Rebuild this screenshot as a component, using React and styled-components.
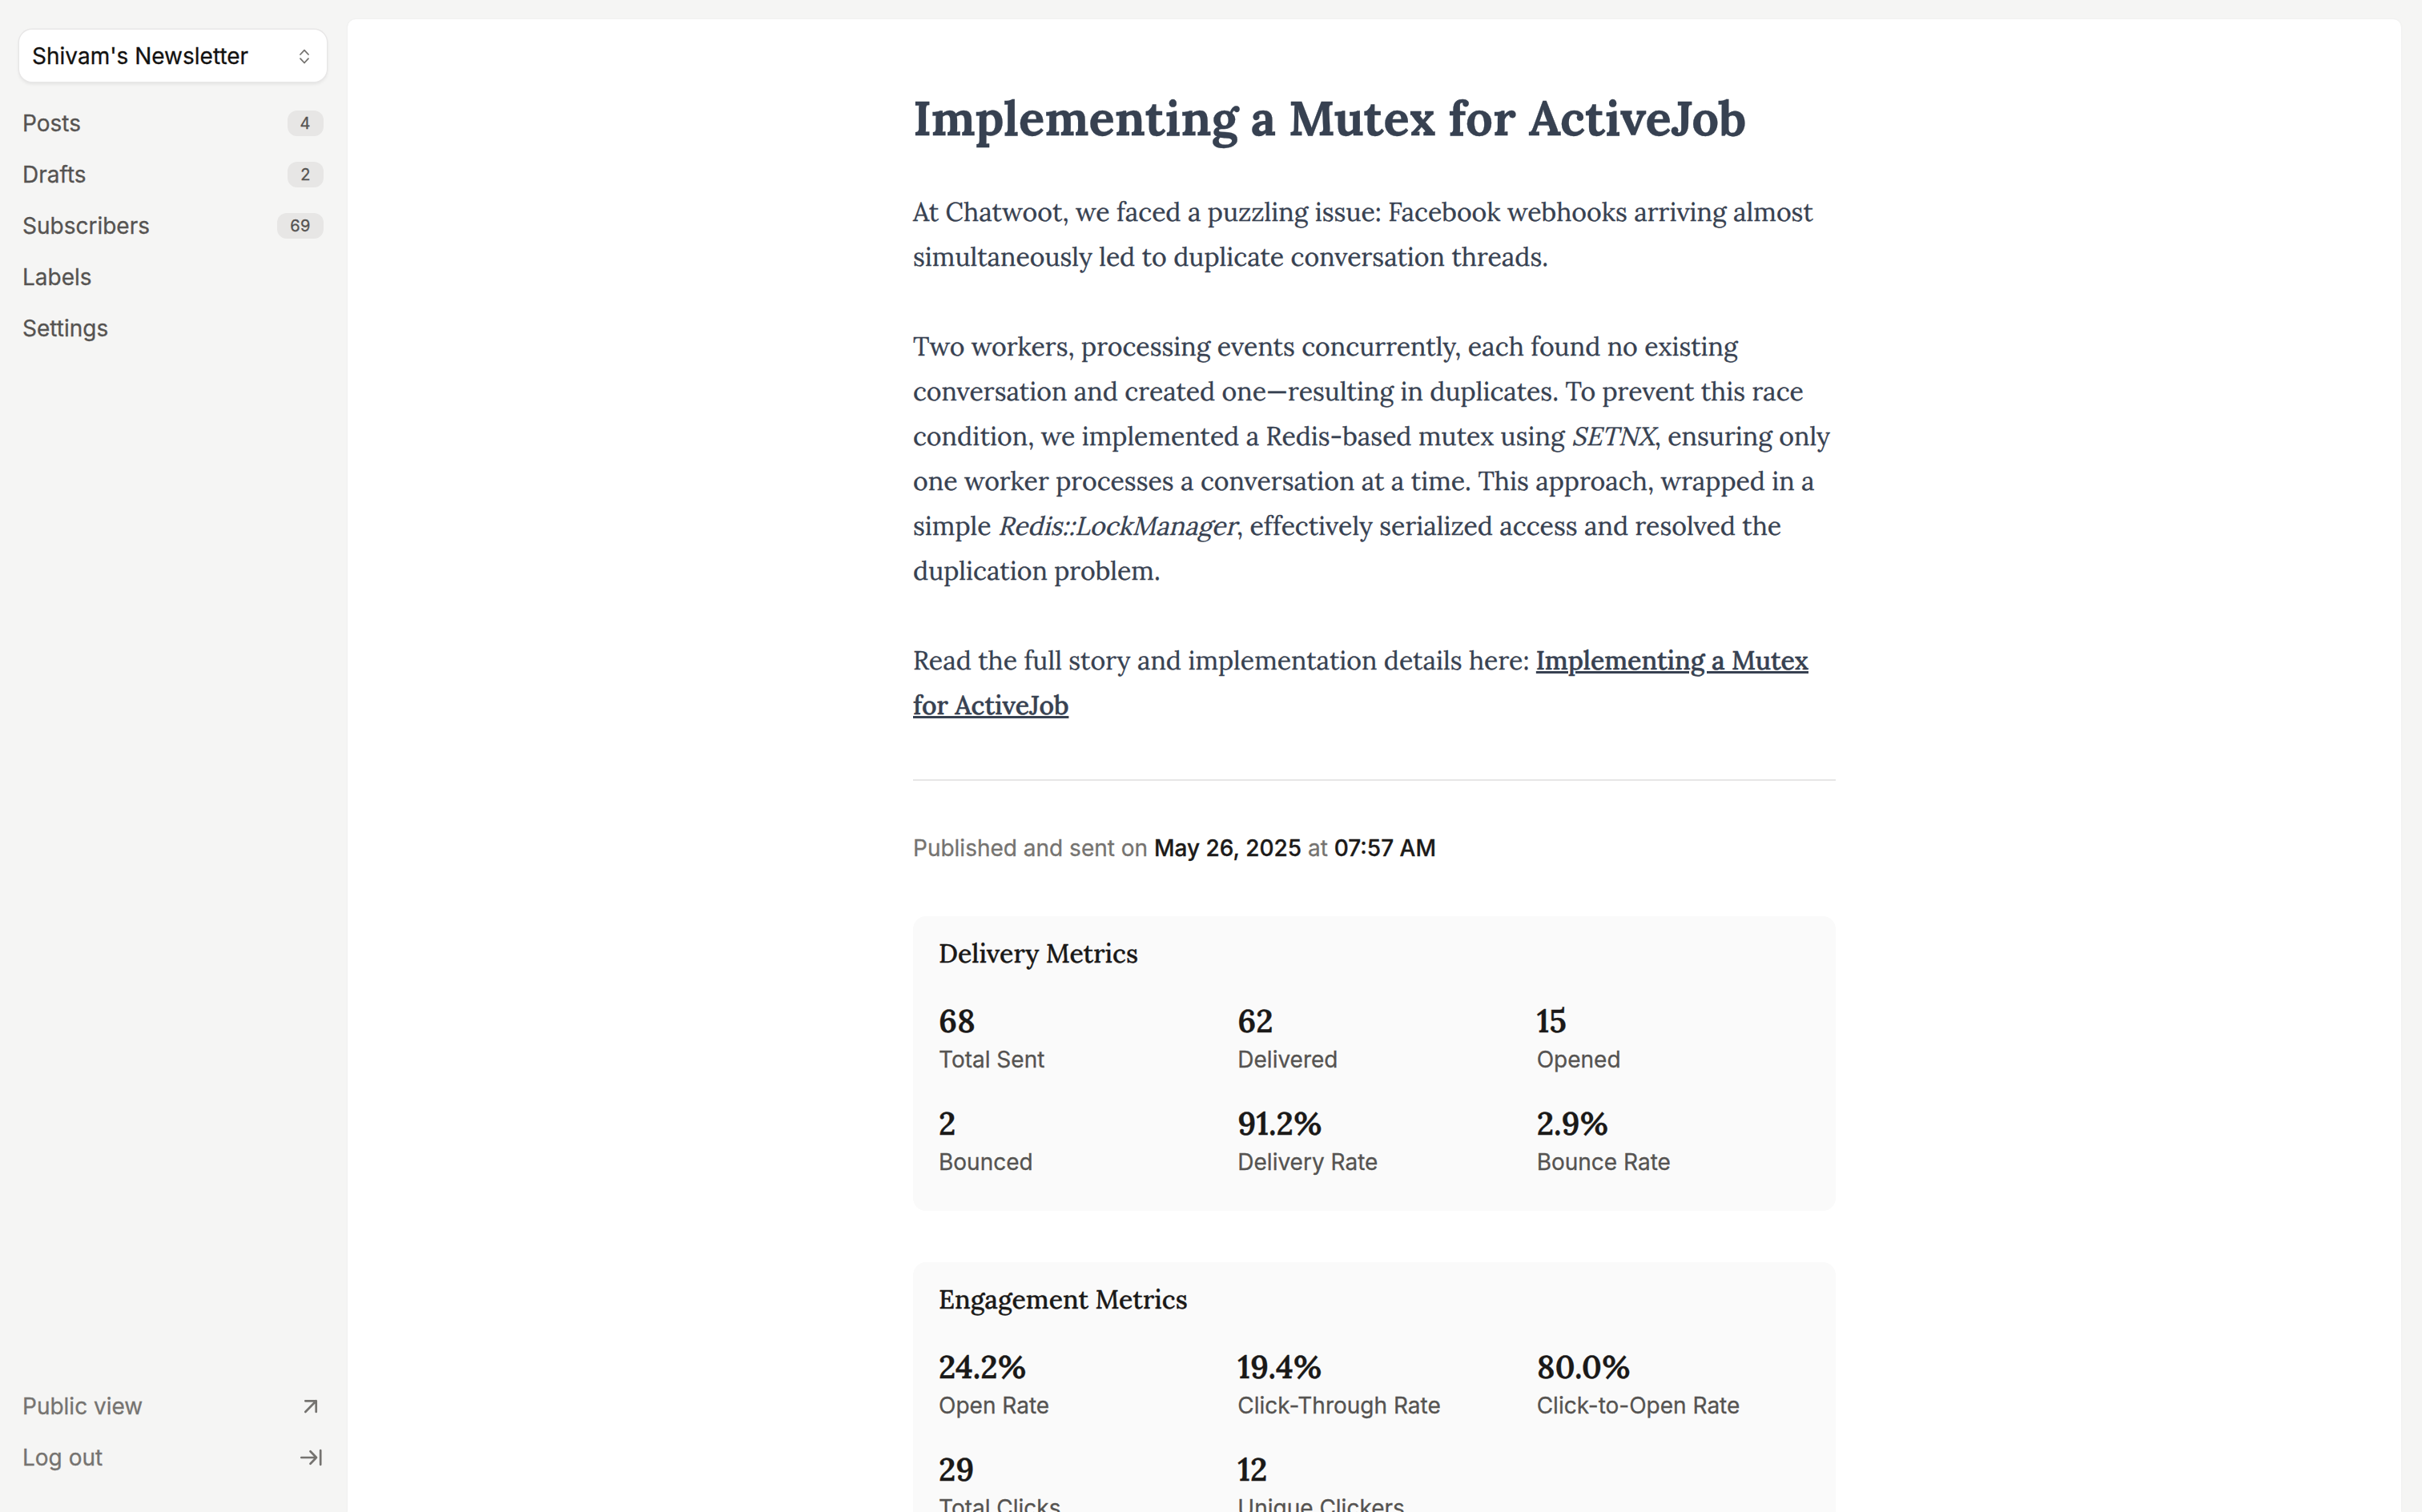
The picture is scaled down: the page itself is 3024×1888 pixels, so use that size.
import React from 'react'
import styled, { createGlobalStyle } from 'styled-components'

const navItems = [
  { label: 'Posts', count: 4 },
  { label: 'Drafts', count: 2 },
  { label: 'Subscribers', count: 69 },
  { label: 'Labels' },
  { label: 'Settings' },
]

const deliveryMetrics = [
  { value: '68', label: 'Total Sent' },
  { value: '62', label: 'Delivered' },
  { value: '15', label: 'Opened' },
  { value: '2', label: 'Bounced' },
  { value: '91.2%', label: 'Delivery Rate' },
  { value: '2.9%', label: 'Bounce Rate' },
]

const engagementMetrics = [
  { value: '24.2%', label: 'Open Rate' },
  { value: '19.4%', label: 'Click-Through Rate' },
  { value: '80.0%', label: 'Click-to-Open Rate' },
  { value: '29', label: 'Total Clicks' },
  { value: '12', label: 'Unique Clickers' },
]

const App = () => (
  <>
    <GlobalStyle />
    <Layout>
      <Sidebar />
      <Main>
        <Content>
          <Post />
          <Divider />
          <PublishedAt>
            Published and sent on <b>May 26, 2025</b> at <b>07:57 AM</b>
          </PublishedAt>
          <Cards>
            <MetricsCard title="Delivery Metrics" metrics={deliveryMetrics} />
            <MetricsCard title="Engagement Metrics" metrics={engagementMetrics} />
          </Cards>
        </Content>
      </Main>
    </Layout>
  </>
)

const Sidebar = () => (
  <Aside>
    <Switcher>
      Shivam's Newsletter
      <ChevronsIcon />
    </Switcher>
    <Nav>
      {navItems.map(({ label, count }) => (
        <NavItem key={label}>
          {label}
          {count && <Badge>{count}</Badge>}
        </NavItem>
      ))}
    </Nav>
    <Footer>
      <NavItem $muted>
        Public view
        <ArrowOutIcon />
      </NavItem>
      <NavItem $muted>
        Log out
        <LogOutIcon />
      </NavItem>
    </Footer>
  </Aside>
)

const Post = () => (
  <Article>
    <h1>Implementing a Mutex for ActiveJob</h1>
    <p>
      At Chatwoot, we faced a puzzling issue: Facebook webhooks arriving almost
      simultaneously led to duplicate conversation threads.
    </p>
    <p>
      Two workers, processing events concurrently, each found no existing
      conversation and created one—resulting in duplicates. To prevent this race
      condition, we implemented a Redis-based mutex using <em>SETNX</em>, ensuring
      only one worker processes a conversation at a time. This approach, wrapped in
      a simple <em>Redis::LockManager</em>, effectively serialized access and
      resolved the duplication problem.
    </p>
    <p>
      Read the full story and implementation details here:{' '}
      <a href="#post">Implementing a Mutex for ActiveJob</a>
    </p>
  </Article>
)

const MetricsCard = ({ title, metrics }) => (
  <Card>
    <h3>{title}</h3>
    <Grid>
      {metrics.map(({ value, label }) => (
        <div key={label}>
          <Value>{value}</Value>
          <Label>{label}</Label>
        </div>
      ))}
    </Grid>
  </Card>
)

const ChevronsIcon = () => (
  <Icon width="20" height="24" viewBox="0 0 20 24" $stroke={1.8}>
    <path d="M5 10 10 4.700l5 5.300M5 15.200l5 5.300 5-5.300" />
  </Icon>
)

const ArrowOutIcon = () => (
  <Icon width="32" height="32" viewBox="0 0 32 32">
    <path d="M9.300 23 22.700 9.300M9.300 9.300h13.400V23" />
  </Icon>
)

const LogOutIcon = () => (
  <Icon width="32" height="32" viewBox="0 0 32 32">
    <path d="M4.300 16H23M15.500 8.300 23 16l-7.500 7.700M28.200 7.200v17.600" />
  </Icon>
)

const GlobalStyle = createGlobalStyle`
  body {
    margin: 0;
    background: #f5f5f4;
    font-family: Inter, "Liberation Sans", sans-serif;
    font-size: 28px;
    -webkit-font-smoothing: antialiased;
    -webkit-text-stroke: 0.3px currentColor;
  }

  * { box-sizing: border-box; }
`

const Layout = styled.div`
  display: flex;
  height: 1888px;
  overflow: hidden;
`

const Aside = styled.aside`
  display: flex;
  flex-direction: column;
  flex: 0 0 434px;
  padding: 37px 26px 36px 24px;
`

const Switcher = styled.div`
  display: flex;
  align-items: center;
  justify-content: space-between;
  height: 65px;
  padding: 0 18px 0 16px;
  border-radius: 16px;
  background: white;
  color: #121110;
  box-shadow: 0 0 0 1.5px #e8e7e7, 0 3px 4px rgba(0, 0, 0, 0.08);

  svg { color: #757370; }
`

const Nav = styled.nav`
  padding: 20px 4px 0;
`

const NavItem = styled.div`
  display: flex;
  align-items: center;
  justify-content: space-between;
  height: 64px;
  color: ${({ $muted }) => ($muted ? '#757370' : '#555351')};
`

const Badge = styled.span`
  height: 32px;
  padding: 0 16px;
  border-radius: 12px;
  background: #e7e6e5;
  font-size: 20px;
  line-height: 33px;
  letter-spacing: 0.5px;
`

const Footer = styled.div`
  margin-top: auto;
  padding: 0 4px;
`

const Icon = styled.svg`
  fill: none;
  stroke: currentColor;
  stroke-width: ${({ $stroke }) => $stroke || 2.7};
  stroke-linecap: round;
  stroke-linejoin: round;
`

const Main = styled.main`
  flex: 1;
  margin: 24px 26px 0 0;
  padding-top: 87px;
  border-radius: 10px 10px 0 0;
  background: white;
  box-shadow: 0 0 3px rgba(0, 0, 0, 0.05);
`

const Content = styled.div`
  width: 1152px;
  margin: 0 auto;
`

const Article = styled.article`
  color: #374151;
  font-family: Lora, "Liberation Serif", serif;
  font-size: 32px;
  line-height: 56px;

  h1 {
    margin: 0 0 54px;
    font-size: 60px;
    font-weight: 700;
    line-height: 72px;
  }

  p { margin: 0 0 56px; }

  /* slanted roman instead of the true italic */
  em {
    display: inline-block;
    font-style: normal;
    transform: skewX(-14deg);
    transform-origin: 0 39px;
  }

  a {
    color: inherit;
    font-weight: 500;
    -webkit-text-stroke: 0.5px currentColor;
    text-decoration-thickness: 3px;
  }
`

const Divider = styled.hr`
  height: 2px;
  margin: 64px 0 0;
  border: 0;
  background: #e7e6e6;
`

const PublishedAt = styled.p`
  margin: 64px 0 0;
  color: #757370;
  line-height: 40px;

  b {
    color: #1c1a19;
    font-weight: 500;
  }
`

const Cards = styled.div`
  display: flex;
  flex-direction: column;
  gap: 64px;
  margin-top: 65px;
`

const Card = styled.section`
  height: 368px;
  padding: 19px 32px 0;
  border-radius: 16px;
  background: #fafafa;
  color: #1a1918;

  h3 {
    margin: 0 0 28px;
    font-family: Lora, "Liberation Serif", serif;
    font-size: 32px;
    font-weight: 500;
    line-height: 56px;
  }
`

const Grid = styled.div`
  display: grid;
  grid-template-columns: repeat(3, 1fr);
  gap: 32px;
`

const Value = styled.div`
  font-family: Lora, "Liberation Serif", serif;
  font-size: 40px;
  font-weight: 600;
  line-height: 56px;
`

const Label = styled.div`
  color: #555351;
  line-height: 40px;
`

export default App
